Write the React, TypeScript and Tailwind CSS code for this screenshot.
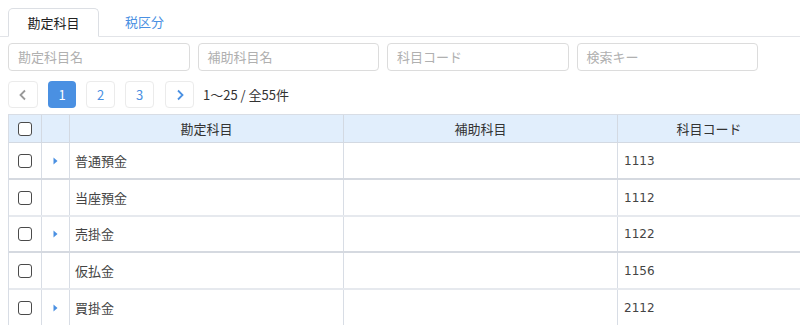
import React from "react";

const rows = [
  { name: "普通預金", code: "1113", exp: true, h: "h-[37px]" },
  { name: "当座預金", code: "1112", exp: false, h: "h-[37px]" },
  { name: "売掛金", code: "1122", exp: true, h: "h-[36px]" },
  { name: "仮払金", code: "1156", exp: false, h: "h-[37px]" },
  { name: "買掛金", code: "2112", exp: true, h: "h-[37px]" },
];

const font = { fontFamily: '"Noto Sans CJK JP", "Noto Sans", sans-serif' };

function Checkbox() {
  return <div className="w-[14px] h-[14px] border-[1.5px] border-[#4a4a4a] rounded-[3px] bg-white" />;
}

export default function App() {
  return (
    <div className="w-[800px] h-[325px] overflow-hidden bg-white text-[#333]" style={font}>
      {/* Tabs */}
      <div className="flex items-end pl-[8px] pt-[8px] h-[37px] border-b border-[#e2e4e8]">
        <div className="w-[91px] h-[29px] -mb-px border border-[#dcdfe4] border-b-white rounded-t-[5px] bg-white flex items-center justify-center text-[13px] text-[#222]">
          勘定科目
        </div>
        <div className="w-[91px] h-[29px] flex items-center justify-center text-[13px] text-[#4a90e2]">
          税区分
        </div>
      </div>
      {/* Search inputs */}
      <div className="flex gap-[8px] pl-[8px] mt-[6px]">
        {["勘定科目名", "補助科目名", "科目コード", "検索キー"].map((p) => (
          <div
            key={p}
            className="w-[181.5px] h-[28px] border border-[#dcdcdc] rounded-[4px] flex items-center px-[9px] text-[13px] text-[#b0b0b0]"
          >
            {p}
          </div>
        ))}
      </div>
      {/* Pagination */}
      <div className="flex items-center pl-[8px] mt-[10px] h-[27px]">
        <div className="w-[30px] h-[27px] border border-[#ebebeb] rounded-[4px] flex items-center justify-center">
          <svg width="10" height="12" viewBox="0 0 10 12"><path d="M7 1.5 L2.5 6 L7 10.5" fill="none" stroke="#999" strokeWidth="1.8" /></svg>
        </div>
        <div className="ml-[10px] w-[28px] h-[27px] rounded-[4px] bg-[#4a90e2] flex items-center justify-center text-[13px] text-white">1</div>
        <div className="ml-[10px] w-[29px] h-[27px] border border-[#ebebeb] rounded-[4px] flex items-center justify-center text-[13px] text-[#4a90e2]">2</div>
        <div className="ml-[10px] w-[29px] h-[27px] border border-[#ebebeb] rounded-[4px] flex items-center justify-center text-[13px] text-[#4a90e2]">3</div>
        <div className="ml-[11px] w-[29px] h-[27px] border border-[#ebebeb] rounded-[4px] flex items-center justify-center">
          <svg width="10" height="12" viewBox="0 0 10 12"><path d="M3 1.5 L7.5 6 L3 10.5" fill="none" stroke="#4a90e2" strokeWidth="1.8" /></svg>
        </div>
        <div className="ml-[9px] text-[13px] text-[#333]">1〜25 / 全55件</div>
      </div>
      {/* Table */}
      <div className="ml-[8px] mt-[6px] w-[792px] border-l border-t border-[#d8dde5]">
        <div className="flex h-[28px] bg-[#e1eefc] border-b border-[#d3d9e2] text-[13px] text-[#333]">
          <div className="w-[33px] flex items-center justify-center border-r border-[#d3d9e2]"><Checkbox /></div>
          <div className="w-[28px] border-r border-[#d3d9e2]" />
          <div className="w-[274px] flex items-center justify-center border-r border-[#d3d9e2]">勘定科目</div>
          <div className="w-[274px] flex items-center justify-center border-r border-[#d3d9e2]">補助科目</div>
          <div className="flex-1 flex items-center justify-center">科目コード</div>
        </div>
        {rows.map((r) => (
          <div
            key={r.code}
            className={
              "flex text-[13px] text-[#444] border-b-2 " +
              r.h +
              " " +
              (r.exp ? "border-[#d5d9e0]" : "border-[#e6e9ee]")
            }
          >
            <div className="w-[33px] flex items-center justify-center border-r border-[#d8dde5]"><Checkbox /></div>
            <div className="w-[28px] flex items-center justify-center border-r border-[#d8dde5]">
              {r.exp && (
                <svg width="5" height="8" viewBox="0 0 5 8"><path d="M0.5 0.5 L4.5 4 L0.5 7.5 Z" fill="#4a90e2" /></svg>
              )}
            </div>
            <div className="w-[274px] flex items-center pl-[5px] border-r border-[#d8dde5]">{r.name}</div>
            <div className="w-[274px] border-r border-[#d8dde5]" />
            <div
              className="flex-1 flex items-center pl-[6px]"
              style={{ fontFamily: '"DejaVu Sans", "Noto Sans CJK JP", sans-serif', fontSize: "12px" }}
            >
              {r.code}
            </div>
          </div>
        ))}
      </div>
    </div>
  );
}
